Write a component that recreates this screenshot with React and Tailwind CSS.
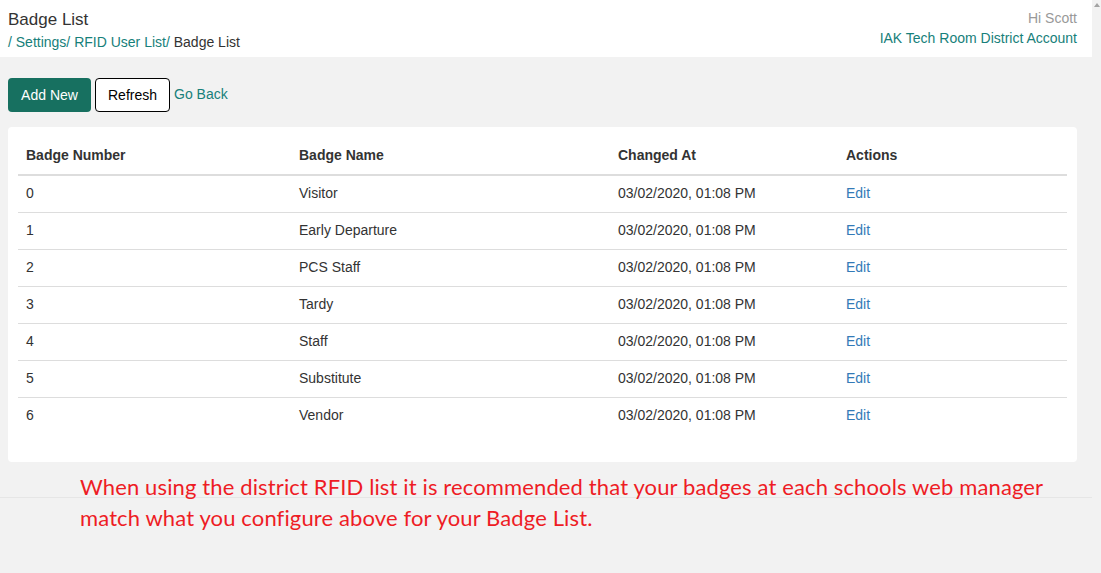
const rows = [
  { num: '0', name: 'Visitor' },
  { num: '1', name: 'Early Departure' },
  { num: '2', name: 'PCS Staff' },
  { num: '3', name: 'Tardy' },
  { num: '4', name: 'Staff' },
  { num: '5', name: 'Substitute' },
  { num: '6', name: 'Vendor' },
]

const App = () => {
  return (
    <div className="relative flex h-[573px] w-full overflow-hidden bg-[#f2f2f2] font-['Liberation_Sans',Arial,sans-serif] text-[14px] text-[#333]">
      {/* Main page */}
      <div className="flex w-[1092px] flex-col">
        {/* Header */}
        <div className="flex h-[57px] justify-between bg-white pl-2 pr-[15px]">
          <div className="flex flex-col pt-[9px]">
            <h1 className="text-[17px] leading-[22px] text-[#333]">Badge List</h1>
            <div className="mt-[2px] leading-[18px]">
              <span className="text-[#17807a]">/ Settings/ RFID User List/ </span>
              <span className="text-[#333]">Badge List</span>
            </div>
          </div>
          <div className="flex flex-col items-end pt-[9px] leading-[18px]">
            <span className="text-[#999]">Hi Scott</span>
            <span className="mt-[2px] text-[#17807a]">IAK Tech Room District Account</span>
          </div>
        </div>

        {/* Actions */}
        <div className="mt-[21px] flex items-center gap-[4px] pl-2">
          <button className="h-[34px] w-[83px] rounded-[4px] bg-[#177060] text-white">Add New</button>
          <button className="h-[34px] w-[75px] rounded-[4px] border border-black bg-white text-black">Refresh</button>
          <a className="-mt-[2px] text-[#17807a]">Go Back</a>
        </div>

        {/* Table card */}
        <div className="mx-2 mt-[15px] w-[1069px] rounded-[4px] bg-white px-[10px] pb-[29px] pt-[10px]">
          <table className="w-full table-fixed border-collapse">
            <colgroup>
              <col className="w-[273px]" />
              <col className="w-[319px]" />
              <col className="w-[228px]" />
              <col />
            </colgroup>
            <thead>
              <tr className="h-[38px] border-b-2 border-[#ddd] text-left font-bold">
                <th className="px-2">Badge Number</th>
                <th className="px-2">Badge Name</th>
                <th className="px-2">Changed At</th>
                <th className="px-2">Actions</th>
              </tr>
            </thead>
            <tbody>
              {rows.map((r, i) => (
                <tr key={r.num} className={i < rows.length - 1 ? 'h-[37px] border-b border-[#ddd]' : 'h-[36px]'}>
                  <td className="px-2">{r.num}</td>
                  <td className="px-2">{r.name}</td>
                  <td className="px-2">03/02/2020, 01:08 PM</td>
                  <td className="px-2 text-[#337ab7]">Edit</td>
                </tr>
              ))}
            </tbody>
          </table>
        </div>

        {/* Footer rule */}
        <div className="mt-[35px] border-t border-[#e6e6e6]" />
      </div>

      {/* Scrollbar strip */}
      <div className="flex w-[9px] justify-center pt-[3px]">
        <div className="h-0 w-0 border-x-[3px] border-b-[4px] border-x-transparent border-b-[#a3a3a3]" />
      </div>

      {/* Annotation */}
      <p className="absolute left-[80px] top-[471px] w-[990px] font-['Lato',sans-serif] text-[22px] leading-[31px] tracking-[0.13px] text-[#ee1c25]">
        When using the district RFID list it is recommended that your badges at each schools web manager match what you configure above for your Badge List.
      </p>
    </div>
  )
}

export default App
